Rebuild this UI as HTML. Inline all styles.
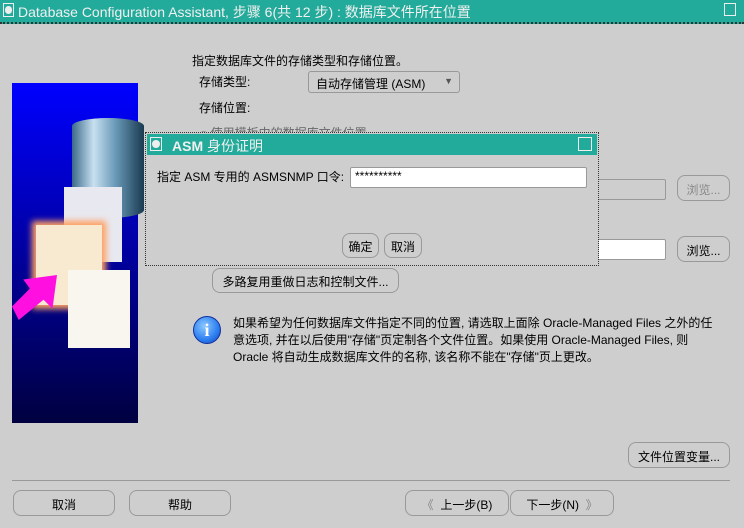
<!DOCTYPE html>
<html><head><meta charset="utf-8"><style>
body{margin:0;width:744px;height:528px;background:#cecece;position:relative;overflow:hidden;font-family:"Liberation Sans","Noto Sans CJK SC",sans-serif;font-size:12px;color:#000}
.a{position:absolute;white-space:nowrap}
.btn{position:absolute;border:1px solid #999;border-radius:8px;background:#cecece;text-align:center;box-sizing:border-box;font-size:12px}
.inp{position:absolute;background:#fff;border:1px solid #999;border-radius:2px;box-sizing:border-box}
</style></head><body>
<div class="a" style="left:0;top:0;width:744px;height:22px;background:#22aa9a;border-bottom:2px dotted #333"></div>
<div class="a" style="left:3px;top:3px;width:11px;height:14px;border:1px solid #eee;box-sizing:border-box"><div style="margin:2px 1px;width:7px;height:8px;border-radius:4px;background:#eee"></div></div>
<div class="a" style="left:18px;top:2px;color:#f0f0f0;font-size:14px">Database Configuration Assistant, 步骤 6(共 12 步) : 数据库文件所在位置</div>
<div class="a" style="left:724px;top:3px;width:12px;height:13px;border:1px solid #eee;box-sizing:border-box"></div>

<div class="a" style="left:192px;top:52px">指定数据库文件的存储类型和存储位置。</div>
<div class="a" style="left:199px;top:73px">存储类型:</div>
<div class="a" style="left:308px;top:71px;width:152px;height:22px;border:1px solid #999;border-radius:3px;box-sizing:border-box;padding:3px 0 0 7px">自动存储管理 (ASM)<span style="position:absolute;right:6px;top:4px;font-size:9px;color:#555">▼</span></div>
<div class="a" style="left:199px;top:99px">存储位置:</div>
<div class="a" style="left:200px;top:124px;color:#666">○ 使用模板中的数据库文件位置</div>

<div class="a" style="left:12px;top:83px;width:126px;height:340px;background:linear-gradient(#0000ff,#0000a0 50%,#000040)"></div>
<div class="a" style="left:72px;top:118px;width:72px;height:100px;background:linear-gradient(90deg,#3a6a8a,#c8e0f0 30%,#6a9ab8 60%,#1a3a50);border-radius:36px/8px"></div>
<div class="a" style="left:64px;top:187px;width:58px;height:75px;background:#e8e8f0"></div>
<div class="a" style="left:36px;top:225px;width:66px;height:80px;background:#f8ead0;box-shadow:0 0 6px 4px #ffa060"></div>
<div class="a" style="left:68px;top:270px;width:62px;height:78px;background:#f8f6ee"></div>
<div class="a" style="left:12px;top:275px;width:45px;height:45px;background:#ff10e0;clip-path:polygon(0 70%,40% 30%,25% 10%,100% 0,90% 75%,70% 55%,15% 100%)"></div>

<div class="inp" style="left:576px;top:179px;width:90px;height:21px;background:#cecece"></div>
<div class="btn" style="left:677px;top:175px;width:53px;height:26px;padding-top:5px;color:#888">浏览...</div>
<div class="inp" style="left:576px;top:239px;width:90px;height:21px"></div>
<div class="btn" style="left:677px;top:236px;width:53px;height:26px;padding-top:5px">浏览...</div>
<div class="btn" style="left:212px;top:268px;width:187px;height:25px;padding-top:4px">多路复用重做日志和控制文件...</div>

<div class="a" style="left:145px;top:132px;width:454px;height:134px;border:1px dotted #333;box-sizing:border-box;background:#cecece"></div>
<div class="a" style="left:147px;top:134px;width:450px;height:21px;background:#22aa9a"></div>
<div class="a" style="left:150px;top:137px;width:12px;height:14px;border:1px solid #eee;box-sizing:border-box"><div style="margin:2px 1px;width:8px;height:8px;border-radius:4px;background:#eee"></div></div>
<div class="a" style="left:172px;top:136px;color:#f0f0f0;font-size:14px"><b>ASM</b> 身份证明</div>
<div class="a" style="left:578px;top:137px;width:14px;height:14px;border:1px solid #eee;box-sizing:border-box"></div>
<div class="a" style="left:157px;top:168px">指定 ASM 专用的 ASMSNMP 口令:</div>
<div class="inp" style="left:350px;top:167px;width:237px;height:21px;padding:1px 0 0 4px">**********</div>
<div class="btn" style="left:342px;top:233px;width:37px;height:25px;padding-top:4px">确定</div>
<div class="btn" style="left:384px;top:233px;width:38px;height:25px;padding-top:4px">取消</div>

<div class="a" style="left:193px;top:316px;width:28px;height:28px;border-radius:50%;background:radial-gradient(circle at 40% 35%,#8cc8ff,#2c7ef0 60%,#1040b0);border:1px solid #1030a0;box-sizing:border-box;color:#fff;font:bold 18px 'Liberation Serif',serif;text-align:center;line-height:26px">i</div>
<div class="a" style="left:233px;top:315px;line-height:17px">如果希望为任何数据库文件指定不同的位置, 请选取上面除 Oracle-Managed Files 之外的任<br>意选项, 并在以后使用"存储"页定制各个文件位置。如果使用 Oracle-Managed Files, 则<br>Oracle 将自动生成数据库文件的名称, 该名称不能在"存储"页上更改。</div>

<div class="btn" style="left:628px;top:442px;width:102px;height:26px;padding-top:5px">文件位置变量...</div>
<div class="a" style="left:12px;top:480px;width:718px;height:1px;background:#999"></div>
<div class="btn" style="left:13px;top:490px;width:102px;height:26px;padding-top:5px">取消</div>
<div class="btn" style="left:129px;top:490px;width:102px;height:26px;padding-top:5px">帮助</div>
<div class="btn" style="left:405px;top:490px;width:104px;height:26px;padding-top:5px"><span style="color:#888">《</span>&nbsp; 上一步(B)</div>
<div class="btn" style="left:510px;top:490px;width:104px;height:26px;padding-top:5px">下一步(N) &nbsp;<span style="color:#888">》</span></div>
</body></html>
